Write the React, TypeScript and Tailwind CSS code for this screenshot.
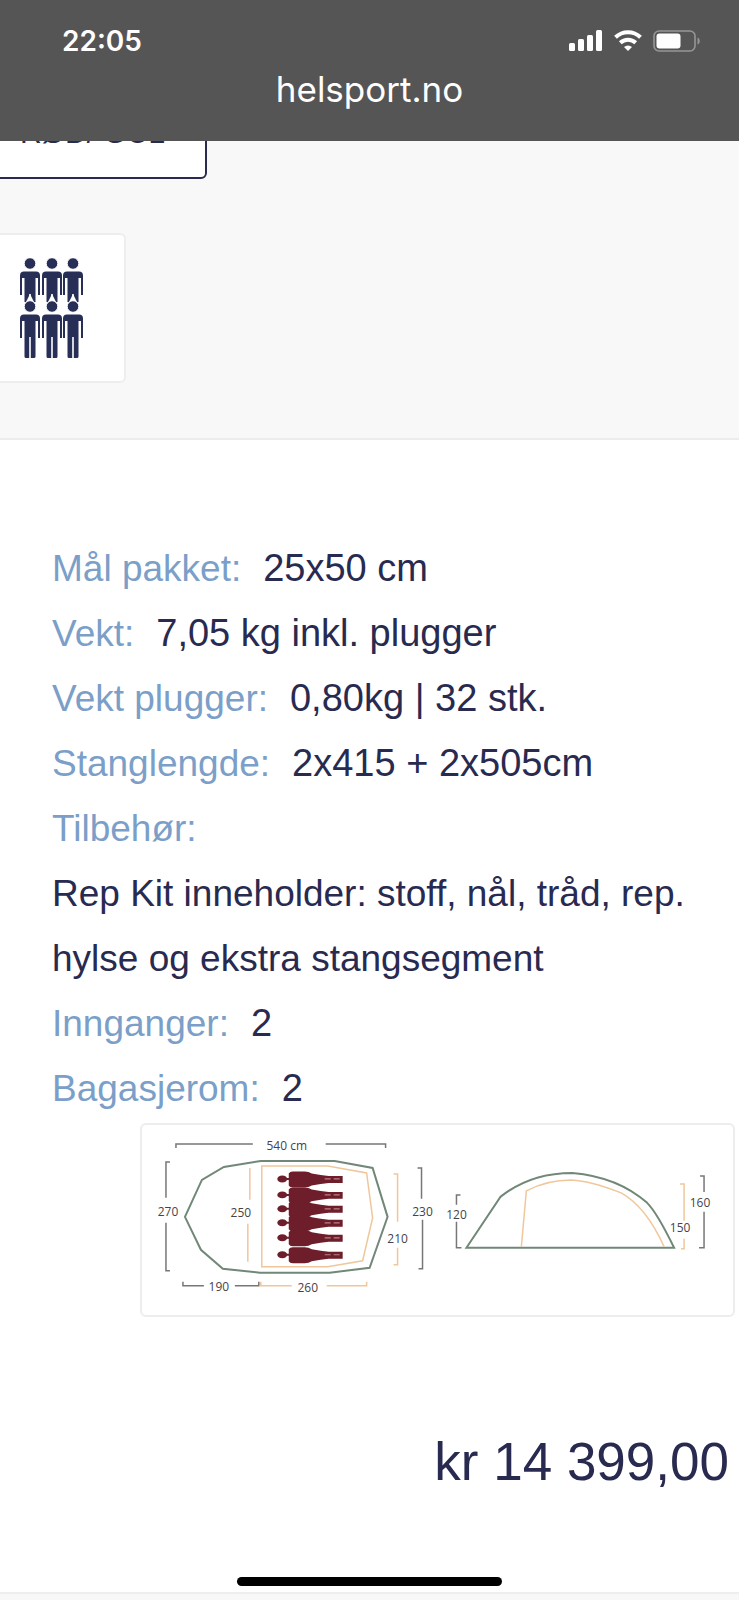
import type { ReactNode } from 'react'

interface Spec {
  label: string
  value?: string
}

const specs: Spec[] = [
  { label: 'Mål pakket:', value: '25x50 cm' },
  { label: 'Vekt:', value: '7,05 kg inkl. plugger' },
  { label: 'Vekt plugger:', value: '0,80kg | 32 stk.' },
  { label: 'Stanglengde:', value: '2x415 + 2x505cm' },
]

const rooms: Spec[] = [
  { label: 'Innganger:', value: '2' },
  { label: 'Bagasjerom:', value: '2' },
]

function StatusBar() {
  return (
    <header className="relative z-10 h-[141px] bg-[#555555] font-['Inter','Liberation_Sans',sans-serif] text-white">
      <div className="flex items-center justify-between pt-[21px] pr-[39px] pl-[62px]">
        <time className="text-[28px] leading-10 font-semibold">22:05</time>
        <div className="flex items-center gap-[11px]">
          <svg width="34" height="22" viewBox="0 0 34 22" fill="currentColor" aria-label="Signal">
            <rect x="0" y="13" width="6" height="8" rx="1.5" />
            <rect x="9" y="9" width="6" height="12" rx="1.5" />
            <rect x="18" y="5" width="6" height="16" rx="1.5" />
            <rect x="27" y="0" width="6" height="21" rx="1.5" />
          </svg>
          <svg width="28" height="22" viewBox="0 0 28 22" fill="none" stroke="currentColor" strokeWidth="4" aria-label="Wi-Fi">
            <path d="M1.5 7.300a18 18 0 0 1 25 0" />
            <path d="M6.300 12.800a11.200 11.200 0 0 1 15.400 0" />
            <path d="M14 21l-4-4a6 6 0 0 1 8 0z" fill="currentColor" stroke="none" />
          </svg>
          <svg width="47" height="22" viewBox="0 0 47 22" aria-label="Batteri">
            <rect x="1" y="1" width="41" height="20" rx="5" fill="none" stroke="#969696" strokeWidth="1.6" />
            <rect x="3.5" y="3.5" width="24" height="15" rx="3" fill="#fff" />
            <path d="M44.500 7.500v7c3-1 3-6 0-7z" fill="#969696" />
          </svg>
        </div>
      </div>
      <p className="mt-1.5 text-center text-[35px] leading-[44px]">helsport.no</p>
    </header>
  )
}

function Person({ x, y }: { x: number; y: number }) {
  return (
    <g transform={`translate(${x} ${y})`}>
      <circle cx="10" cy="5.500" r="5.800" stroke="#fff" strokeWidth="1" />
      <path d="M4 13.500h12q4 0 4 4V37h-2V20h-2.500v35.500q0 1.500-1.500 1.500h-3.200V36h-1.600v21H6q-1.500 0-1.500-1.500V20H2v17H0V17.500q0-4 4-4z" />
    </g>
  )
}

function CapacityIcon() {
  return (
    <svg width="64" height="101" viewBox="0 0 64 101" fill="#282f56" role="img" aria-label="6 personer">
      <clipPath id="upper">
        <rect width="64" height="44" />
      </clipPath>
      <g clipPath="url(#upper)">
        <Person x={0} y={0} />
        <Person x={22} y={0} />
        <Person x={43} y={0} />
      </g>
      <path d="M10 36l4 8H6zM32 36l4 8H28zM53 36l4 8H49z" fill="#fff" />
      <Person x={0} y={43} />
      <Person x={22} y={43} />
      <Person x={43} y={43} />
    </svg>
  )
}

function SpecRow({ label, children }: { label: string; children?: ReactNode }) {
  return (
    <div>
      <dt className="mr-[22px] inline text-[37px] text-[#7b9fc8]">{label}</dt>
      <dd className="inline text-[38px]">{children}</dd>
    </div>
  )
}

// Sleeping person seen from above, head to the left
function Sleeper({ y }: { y: number }) {
  return (
    <g transform={`translate(135 ${y})`} fill="#6e1d2b">
      <ellipse cx="5.500" cy="0" rx="5" ry="3.500" />
      <path d="M9-1h3V-5.500q1-2 4-2h12q4 0 7 2l9 1.500 8 1h14v7H52l-8 1-9 1.500q-3 2-7 2H16q-3 0-4-2V1H9z" />
      <path d="M48 0h17" stroke="#b98088" strokeWidth="1.200" strokeDasharray="6 3" />
    </g>
  )
}

function TentDiagram() {
  return (
    <svg viewBox="0 0 592 190" className="block w-full" role="img" aria-label="Målskisse av teltet">
      {/* Floor plan */}
      <g fill="none" stroke="#77777a" strokeWidth="1.500">
        <path d="M34 23v-4h77M184 19h60v4" />
        <path d="M28 37h-4v36M24 98v48h4" />
        <path d="M41 157v4h21M93 161h24v-4" />
        <path d="M276 43h4v31M281 95v49h-4" />
      </g>
      <g fill="none" stroke="#efc79b" strokeWidth="1.500">
        <path d="M108 43v32M106 99v38" />
        <path d="M252 49h4v48M256 123v17h-4" />
        <path d="M119 157v4h31M185 161h40v-4" />
        <path d="M120 41h66l39 7 6 45-10 43-35 6h-66z" />
      </g>
      <path d="M43 92l17-37 22-13 37-6h74l38 7 15 49-18 51-40 5h-70l-37-4-22-19z" fill="none" stroke="#718878" strokeWidth="2" />
      {[54, 70, 84, 98, 113, 130].map((y) => (
        <Sleeper key={y} y={y} />
      ))}

      {/* Side view */}
      <path d="M325 123l34-51q30-24 72-24 46 4 75 30 10 10 27 45z" fill="none" stroke="#718878" strokeWidth="2" />
      <path d="M380 122l5-56q20-11 45-11 20 1 50 13 25 14 43 54" fill="none" stroke="#efc79b" strokeWidth="1.500" />
      <path d="M319 70h-4v10M315 97v26h5M559 51h4v16M563 87v36h-5" fill="none" stroke="#77777a" strokeWidth="1.500" />
      <path d="M539 59h4v37M543 114v10h-3" fill="none" stroke="#efc79b" strokeWidth="1.500" />

      <g fill="#46424a" fontSize="12" fontWeight="500" textAnchor="middle" fontFamily="'Open Sans', sans-serif">
        <text x="145" y="25">540 cm</text>
        <text x="26" y="91">270</text>
        <text x="99" y="92">250</text>
        <text x="77" y="166">190</text>
        <text x="166" y="167">260</text>
        <text x="256" y="118">210</text>
        <text x="281" y="91">230</text>
        <text x="315" y="94">120</text>
        <text x="539" y="107">150</text>
        <text x="559" y="82">160</text>
      </g>
    </svg>
  )
}

export default function App() {
  return (
    <div className="relative min-h-screen overflow-hidden bg-white font-['Liberation_Sans',Arial,sans-serif] text-[#282a50]">
      <StatusBar />

      <section className="-mt-12 border-b-2 border-[#ececec] bg-[#f8f8f8] pb-[55px]">
        <button
          type="button"
          className="-ml-2 flex h-[86px] w-[215px] items-start rounded-md border-2 border-[#282a50] bg-white pt-4 pl-[26px] text-left text-[30px] leading-[44px]"
        >
          RØD/ GUL
        </button>
        <div className="mt-[54px] -ml-2 flex h-[150px] w-[134px] items-center rounded-md border-2 border-[#eeeeee] bg-white pl-[26px]">
          <CapacityIcon />
        </div>
      </section>

      <main className="pt-24">
        <dl className="px-[52px] text-[37px] leading-[65px]">
          {specs.map((spec) => (
            <SpecRow key={spec.label} label={spec.label}>
              {spec.value}
            </SpecRow>
          ))}
          <div>
            <dt className="text-[#7b9fc8]">Tilbehør:</dt>
            <dd className="-mr-5">Rep Kit inneholder: stoff, nål, tråd, rep. hylse og ekstra stangsegment</dd>
          </div>
          {rooms.map((spec) => (
            <SpecRow key={spec.label} label={spec.label}>
              {spec.value}
            </SpecRow>
          ))}
        </dl>

        <figure className="mt-0.5 mr-1 ml-[140px] rounded-md border-2 border-[#ededed]">
          <TentDiagram />
        </figure>

        <p className="mt-[110px] pr-[10px] text-right text-[53px] leading-[70px]">kr 14 399,00</p>
      </main>

      <footer className="mt-20">
        <div className="mx-auto h-[9px] w-[265px] rounded-full bg-black" />
        <div className="mt-[6px] h-2 border-t-2 border-[#eeeeee] bg-[#f8f8f8]" />
      </footer>
    </div>
  )
}
